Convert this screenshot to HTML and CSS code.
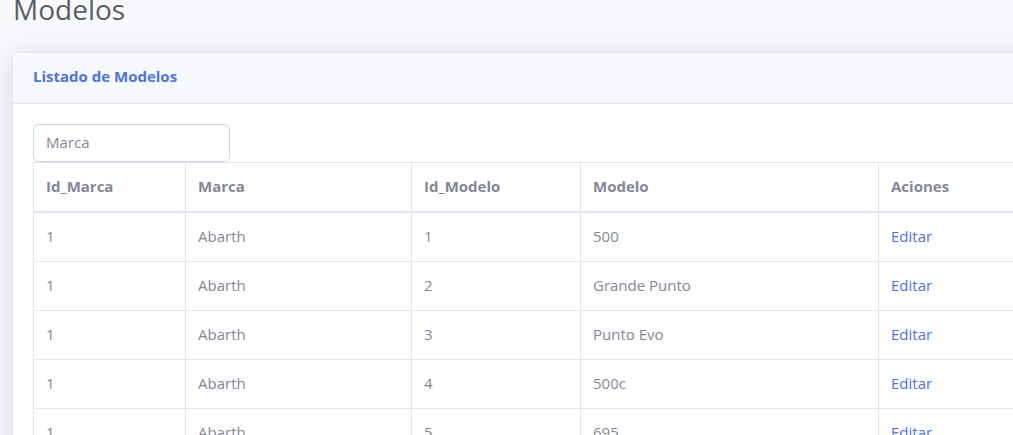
FILE: index.html
```html
<!DOCTYPE html>
<html lang="es">
<head>
<meta charset="utf-8">
<title>Modelos</title>
<link rel="stylesheet" href="styles.css">
</head>
<body>
<div class="page">
  <h1 class="page-title">Modelos</h1>
  <div class="card">
    <div class="card-header">
      <h6 class="card-title">Listado de Modelos</h6>
    </div>
    <div class="card-body">
      <input class="search" type="text" placeholder="Marca">
      <table class="table">
        <colgroup>
          <col class="c1"><col class="c2"><col class="c3"><col class="c4"><col class="c5">
        </colgroup>
        <thead>
          <tr><th>Id_Marca</th><th>Marca</th><th>Id_Modelo</th><th>Modelo</th><th>Aciones</th></tr>
        </thead>
        <tbody>
          <tr><td>1</td><td>Abarth</td><td>1</td><td>500</td><td><a href="#">Editar</a></td></tr>
          <tr><td>1</td><td>Abarth</td><td>2</td><td>Grande Punto</td><td><a href="#">Editar</a></td></tr>
          <tr><td>1</td><td>Abarth</td><td>3</td><td>Punto Evo</td><td><a href="#">Editar</a></td></tr>
          <tr><td>1</td><td>Abarth</td><td>4</td><td>500c</td><td><a href="#">Editar</a></td></tr>
          <tr><td>1</td><td>Abarth</td><td>5</td><td>695</td><td><a href="#">Editar</a></td></tr>
          <tr><td>1</td><td>Abarth</td><td>6</td><td>Ritmo</td><td><a href="#">Editar</a></td></tr>
        </tbody>
      </table>
    </div>
  </div>
</div>
</body>
</html>
```
FILE: styles.css
```css
html, body {
  margin: 0;
  padding: 0;
  overflow: hidden;
  background: #f8f9fc;
}
body {
  font-family: "Open Sans", "Noto Sans", sans-serif;
  font-size: 16px;
  color: #858796;
}
.page {
  padding: 0 0 0 12px;
  width: 1150px;
}
.page-title {
  margin: -8px 0 26px 1px;
  font-size: 28px;
  line-height: 34px;
  font-weight: 400;
  color: #5a5c69;
}
.card {
  background: #fff;
  border: 1px solid #e3e6f0;
  border-radius: 5.6px;
  box-shadow: 0 2.4px 28px 0 rgba(58, 59, 69, 0.15);
  overflow: hidden;
}
.card-header {
  background: #f8f9fc;
  border-bottom: 1px solid #e3e6f0;
  padding: 13px 20px 17px;
  height: 20px;
}
.card-title {
  margin: 0;
  font-size: 15px;
  line-height: 20px;
  font-weight: 700;
  color: #4e73df;
}
.card-body {
  padding: 20px 20px;
}
.search {
  display: block;
  box-sizing: border-box;
  width: 197px;
  height: 38px;
  padding: 5px 12px 7px;
  border: 1px solid #d1d3e2;
  border-radius: 5.6px;
  font-family: inherit;
  font-size: 15px;
  color: #6e707e;
  background: #fff;
}
.search::placeholder {
  color: #858796;
  opacity: 1;
}
.table {
  border-collapse: collapse;
  table-layout: fixed;
  width: 1100px;
  color: #858796;
}
.c1 { width: 152px; }
.c2 { width: 226px; }
.c3 { width: 169px; }
.c4 { width: 298px; }
.c5 { width: 255px; }
.table th, .table td {
  border: 1px solid #e3e6f0;
  padding: 11px 12px 13px;
  text-align: left;
  line-height: 24px;
  font-size: 15px;
  vertical-align: top;
}
.table th {
  font-weight: 700;
  border-bottom-width: 2px;
}
.table a {
  color: #4e73df;
  text-decoration: none;
}
```
